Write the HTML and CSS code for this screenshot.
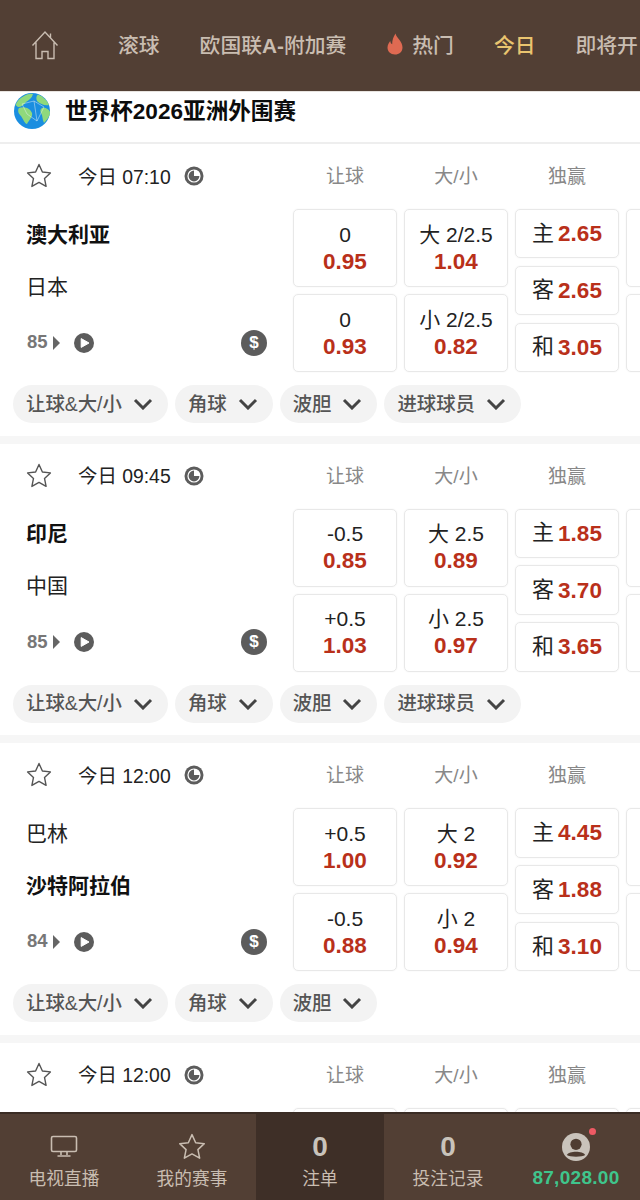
FILE: index.html
```html
<!DOCTYPE html>
<html lang="zh-CN">

<head>
    <meta charset="UTF-8">
    <meta name="viewport" content="width=device-width, initial-scale=1.0">
    <title>世界杯2026亚洲外围赛</title>
    <link rel="stylesheet" href="styles.css">
</head>

<body>

    <svg class="sprites" width="0" height="0">
        <symbol id="star" viewBox="0 0 26 26">
            <path d="M13 1.5 L16.4 9 L24.4 9.9 L18.5 15.4 L20.1 23.4 L13 19.4 L5.9 23.4 L7.5 15.4 L1.6 9.9 L9.6 9 Z" fill="none" stroke="currentColor" stroke-width="1.4" stroke-linejoin="round" />
        </symbol>
        <symbol id="clock" viewBox="0 0 20 20">
            <circle cx="10" cy="10" r="9.5" fill="#5c5c5c" />
            <circle cx="10" cy="10" r="6.6" fill="#fff" />
            <path d="M10 4.6 V10 H15.4 A5.4 5.4 0 1 1 10 4.6 Z" fill="#5c5c5c" />
        </symbol>
        <symbol id="play" viewBox="0 0 20 20">
            <circle cx="10" cy="10" r="10" fill="#5c5c5c" />
            <path d="M7.2 5.6 L15 10 L7.2 14.4 Z" fill="#fff" stroke="#fff" stroke-linejoin="round" />
        </symbol>
        <symbol id="chevron" viewBox="0 0 20 12">
            <path d="M2 2 L10 10 L18 2" fill="none" stroke="currentColor" stroke-width="3" />
        </symbol>
    </svg>

    <header class="top-nav">
        <svg class="home-icon" viewBox="0 0 28 30">
            <path d="M1.5 15.5 L14 2 L26.5 15.5 M19.5 7.5 V3.5 M5 12.5 V28.5 H11 V21.5 H17 V28.5 H23 V12.5" fill="none" stroke="#c9bdb1" stroke-width="1.4" />
        </svg>
        <a class="nav-link">滚球</a>
        <a class="nav-link">欧国联<b>A-</b>附加赛</a>
        <a class="nav-link nav-hot">
            <svg class="flame" viewBox="0 0 18 22">
                <path d="M9.5 0.5 C10.5 5 16.5 8 16.5 14.5 C16.5 19 13 21.5 9 21.5 C4.5 21.5 1.5 18.5 1.5 14.5 C1.5 11.5 3.2 9.5 4.2 8 C4.6 9.8 5.2 10.8 6.2 11.3 C6 7.5 7.5 3.5 9.5 0.5 Z" fill="#df6a52" />
            </svg>
            热门
        </a>
        <a class="nav-link nav-active">今日</a>
        <a class="nav-link">即将开</a>
    </header>

    <main class="match-list">
        <div class="league-row">
            <svg class="globe" viewBox="0 0 36 36">
                <circle cx="18" cy="18" r="18" fill="#1a8ee0" />
                <path d="M10 3 C13 1 17 0.5 19 1 C18 5 15 7 12 9 C10 12 7 14 4 14 L1.5 12 C3 8 6 5 10 3 Z" fill="#8fd97c" />
                <path d="M24 1.5 C29 3.5 33 7 35 12 C31 13 26 11 23 8 C22 6 22 3 24 1.5 Z" fill="#8fd97c" />
                <path d="M5 15 C10 13 16 15 18 20 C19 24 15 27 13 31 C11 31 9 26 7 23 C5 21 3 18 5 15 Z" fill="#8fd97c" />
                <path d="M28 15 C31 14 35 16 36 19 C36 23 33 27 30 30 C28 26 29 23 27 20 C26 18 26 16 28 15 Z" fill="#8fd97c" />
                <path d="M8 11 L20 8 L30 14 L23 28 L13 21 L8 11 M20 8 L23 28" fill="none" stroke="#e6f3f5" stroke-width="0.6" stroke-opacity="0.8" />
            </svg>
            <h1 class="league-name">世界杯2026亚洲外围赛</h1>
        </div>

        <section class="match-card">
            <div class="match-head">
                <div class="match-info">
                    <svg class="star-icon"><use href="#star" /></svg>
                    <span class="match-time">今日 07:10</span>
                    <svg class="clock-icon"><use href="#clock" /></svg>
                </div>
                <div class="col-label">让球</div>
                <div class="col-label">大/小</div>
                <div class="col-label">独赢</div>
            </div>
            <div class="match-body">
                <div class="teams">
                    <div class="team team-fav">澳大利亚</div>
                    <div class="team">日本</div>
                    <div class="match-meta">
                        <span class="market-count">85</span><span class="arrow"></span>
                        <svg class="play-icon"><use href="#play" /></svg>
                        <span class="dollar">$</span>
                    </div>
                </div>
                <div class="odds-col">
                    <div class="odd-box"><span>0</span><b>0.95</b></div>
                    <div class="odd-box"><span>0</span><b>0.93</b></div>
                </div>
                <div class="odds-col">
                    <div class="odd-box"><span>大 2/2.5</span><b>1.04</b></div>
                    <div class="odd-box"><span>小 2/2.5</span><b>0.82</b></div>
                </div>
                <div class="odds-col win-col">
                    <div class="odd-box"><span>主</span><b>2.65</b></div>
                    <div class="odd-box"><span>客</span><b>2.65</b></div>
                    <div class="odd-box"><span>和</span><b>3.05</b></div>
                </div>
                <div class="odds-col">
                    <div class="odd-box"></div>
                    <div class="odd-box"></div>
                </div>
            </div>
            <div class="chips">
                <div class="chip">让球&amp;大/小<svg class="chevron"><use href="#chevron" /></svg></div>
                <div class="chip">角球<svg class="chevron"><use href="#chevron" /></svg></div>
                <div class="chip">波胆<svg class="chevron"><use href="#chevron" /></svg></div>
                <div class="chip">进球球员<svg class="chevron"><use href="#chevron" /></svg></div>
            </div>
        </section>

        <section class="match-card">
            <div class="match-head">
                <div class="match-info">
                    <svg class="star-icon"><use href="#star" /></svg>
                    <span class="match-time">今日 09:45</span>
                    <svg class="clock-icon"><use href="#clock" /></svg>
                </div>
                <div class="col-label">让球</div>
                <div class="col-label">大/小</div>
                <div class="col-label">独赢</div>
            </div>
            <div class="match-body">
                <div class="teams">
                    <div class="team team-fav">印尼</div>
                    <div class="team">中国</div>
                    <div class="match-meta">
                        <span class="market-count">85</span><span class="arrow"></span>
                        <svg class="play-icon"><use href="#play" /></svg>
                        <span class="dollar">$</span>
                    </div>
                </div>
                <div class="odds-col">
                    <div class="odd-box"><span>-0.5</span><b>0.85</b></div>
                    <div class="odd-box"><span>+0.5</span><b>1.03</b></div>
                </div>
                <div class="odds-col">
                    <div class="odd-box"><span>大 2.5</span><b>0.89</b></div>
                    <div class="odd-box"><span>小 2.5</span><b>0.97</b></div>
                </div>
                <div class="odds-col win-col">
                    <div class="odd-box"><span>主</span><b>1.85</b></div>
                    <div class="odd-box"><span>客</span><b>3.70</b></div>
                    <div class="odd-box"><span>和</span><b>3.65</b></div>
                </div>
                <div class="odds-col">
                    <div class="odd-box"></div>
                    <div class="odd-box"></div>
                </div>
            </div>
            <div class="chips">
                <div class="chip">让球&amp;大/小<svg class="chevron"><use href="#chevron" /></svg></div>
                <div class="chip">角球<svg class="chevron"><use href="#chevron" /></svg></div>
                <div class="chip">波胆<svg class="chevron"><use href="#chevron" /></svg></div>
                <div class="chip">进球球员<svg class="chevron"><use href="#chevron" /></svg></div>
            </div>
        </section>

        <section class="match-card">
            <div class="match-head">
                <div class="match-info">
                    <svg class="star-icon"><use href="#star" /></svg>
                    <span class="match-time">今日 12:00</span>
                    <svg class="clock-icon"><use href="#clock" /></svg>
                </div>
                <div class="col-label">让球</div>
                <div class="col-label">大/小</div>
                <div class="col-label">独赢</div>
            </div>
            <div class="match-body">
                <div class="teams">
                    <div class="team">巴林</div>
                    <div class="team team-fav">沙特阿拉伯</div>
                    <div class="match-meta">
                        <span class="market-count">84</span><span class="arrow"></span>
                        <svg class="play-icon"><use href="#play" /></svg>
                        <span class="dollar">$</span>
                    </div>
                </div>
                <div class="odds-col">
                    <div class="odd-box"><span>+0.5</span><b>1.00</b></div>
                    <div class="odd-box"><span>-0.5</span><b>0.88</b></div>
                </div>
                <div class="odds-col">
                    <div class="odd-box"><span>大 2</span><b>0.92</b></div>
                    <div class="odd-box"><span>小 2</span><b>0.94</b></div>
                </div>
                <div class="odds-col win-col">
                    <div class="odd-box"><span>主</span><b>4.45</b></div>
                    <div class="odd-box"><span>客</span><b>1.88</b></div>
                    <div class="odd-box"><span>和</span><b>3.10</b></div>
                </div>
                <div class="odds-col">
                    <div class="odd-box"></div>
                    <div class="odd-box"></div>
                </div>
            </div>
            <div class="chips">
                <div class="chip">让球&amp;大/小<svg class="chevron"><use href="#chevron" /></svg></div>
                <div class="chip">角球<svg class="chevron"><use href="#chevron" /></svg></div>
                <div class="chip">波胆<svg class="chevron"><use href="#chevron" /></svg></div>
            </div>
        </section>

        <section class="match-card">
            <div class="match-head">
                <div class="match-info">
                    <svg class="star-icon"><use href="#star" /></svg>
                    <span class="match-time">今日 12:00</span>
                    <svg class="clock-icon"><use href="#clock" /></svg>
                </div>
                <div class="col-label">让球</div>
                <div class="col-label">大/小</div>
                <div class="col-label">独赢</div>
            </div>
            <div class="match-body">
                <div class="teams"></div>
                <div class="odds-col"><div class="odd-box"></div></div>
                <div class="odds-col"><div class="odd-box"></div></div>
                <div class="odds-col win-col"><div class="odd-box"></div></div>
                <div class="odds-col"><div class="odd-box"></div></div>
            </div>
        </section>
    </main>

    <footer class="bottom-bar">
        <div class="bar-item">
            <svg class="bar-icon" viewBox="0 0 28 24">
                <rect x="1.5" y="1.5" width="25" height="15" rx="1.5" fill="none" stroke="#c9bdb1" stroke-width="1.6" />
                <path d="M11 17 V20 M17 17 V20 M7.5 21 H20.5" fill="none" stroke="#c9bdb1" stroke-width="1.6" />
            </svg>
            <span class="bar-label">电视直播</span>
        </div>
        <div class="bar-item">
            <svg class="bar-icon bar-star"><use href="#star" /></svg>
            <span class="bar-label">我的赛事</span>
        </div>
        <div class="bar-item bar-active">
            <span class="bar-count">0</span>
            <span class="bar-label">注单</span>
        </div>
        <div class="bar-item">
            <span class="bar-count">0</span>
            <span class="bar-label">投注记录</span>
        </div>
        <div class="bar-item">
            <span class="bar-dot"></span>
            <svg class="bar-icon" viewBox="0 0 26 26">
                <circle cx="13" cy="13" r="13" fill="#c9c3bb" />
                <circle cx="13" cy="10.5" r="5.2" fill="#4f3d32" />
                <path d="M4.5 20.5 C6.5 16.5 19.5 16.5 21.5 20.5 C19 22.5 7 22.5 4.5 20.5 Z" fill="#4f3d32" />
            </svg>
            <span class="bar-balance">87,028.00</span>
        </div>
    </footer>

</body>

</html>
```

FILE: styles.css
```css
* {
    box-sizing: border-box;
}

html,
body {
    height: 1200px;
}

body {
    margin: 0;
    display: flex;
    flex-direction: column;
    overflow: hidden;
    background: #fff;
    color: #111;
    font-family: "Liberation Sans", "Noto Sans CJK SC", sans-serif;
}

.sprites {
    position: absolute;
}

.top-nav {
    flex: none;
    height: 92px;
    padding: 0 0 1px 31px;
    display: flex;
    align-items: center;
    gap: 40px;
    overflow: hidden;
    white-space: nowrap;
    background: #523f34;
    border-bottom: 1px solid #e8e4e0;
}

.home-icon {
    flex: none;
    width: 28px;
    height: 30px;
    margin-right: 19px;
}

.nav-link {
    flex: none;
    padding-bottom: 2px;
    font-size: 20.8px;
    font-weight: 500;
    color: #c9bdb1;
}

.nav-hot {
    display: flex;
    align-items: center;
    gap: 8px;
}

.nav-active {
    color: #e9c46f;
}

.flame {
    width: 18px;
    height: 22px;
}

.match-list {
    flex: 1;
    min-height: 0;
    overflow: hidden;
}

.league-row {
    height: 52px;
    padding: 1px 0 13px 14px;
    display: flex;
    align-items: center;
    gap: 15px;
    border-bottom: 2px solid #eee;
}

.globe {
    flex: none;
    width: 36px;
    height: 36px;
}

.league-name {
    margin: 0;
    padding-bottom: 3px;
    font-size: 22.6px;
    font-weight: 700;
    color: #0c0c0c;
}

.match-card {
    height: 299.67px;
    overflow: hidden;
    border-bottom: 8.67px solid #f6f6f6;
}

.match-head {
    height: 65px;
    padding-bottom: 1px;
    display: flex;
    align-items: center;
    gap: 7px;
}

.match-info {
    flex: none;
    width: 286px;
    padding-left: 26px;
    display: flex;
    align-items: center;
}

.star-icon {
    flex: none;
    width: 26px;
    height: 26px;
    color: #555;
}

.match-time {
    margin-left: 26px;
    padding-bottom: 2px;
    font-size: 19.4px;
    color: #222;
}

.clock-icon {
    flex: none;
    width: 20px;
    height: 20px;
    margin-left: 13px;
}

.col-label {
    flex: none;
    width: 104px;
    padding-bottom: 3px;
    text-align: center;
    font-size: 19px;
    color: #888;
}

.match-body {
    height: 163px;
    display: flex;
    gap: 7px;
}

.teams {
    flex: none;
    width: 286px;
    padding: 0 19px 0 26px;
    display: flex;
    flex-direction: column;
}

.team {
    flex: none;
    height: 52px;
    padding-bottom: 5px;
    display: flex;
    align-items: center;
    font-size: 21px;
    color: #222;
}

.team-fav {
    font-weight: 700;
    color: #111;
}

.match-meta {
    flex: 1;
    padding-left: 1px;
    display: flex;
    align-items: center;
}

.market-count {
    padding-bottom: 1px;
    font-size: 18.5px;
    font-weight: 700;
    color: #777;
}

.arrow {
    width: 0;
    height: 0;
    margin-left: 5px;
    border-style: solid;
    border-width: 7px 0 7px 7px;
    border-color: transparent transparent transparent #666;
}

.play-icon {
    flex: none;
    width: 20px;
    height: 20px;
    margin-left: 14px;
}

.dollar {
    flex: none;
    width: 26px;
    height: 26px;
    margin-left: auto;
    border-radius: 50%;
    background: #5c5c5c;
    color: #fff;
    font-size: 17px;
    font-weight: 700;
    line-height: 26px;
    text-align: center;
}

.odds-col {
    flex: none;
    width: 104px;
    display: flex;
    flex-direction: column;
    gap: 7px;
}

.odd-box {
    flex: 1;
    display: flex;
    flex-direction: column;
    align-items: center;
    justify-content: center;
    border: 1px solid #e8e8e8;
    border-radius: 5px;
    box-shadow: 0 0 2px rgba(0, 0, 0, 0.06);
    font-size: 21px;
    line-height: 26px;
    color: #222;
}

.odd-box b {
    margin-top: 1px;
    font-size: 22.5px;
    color: #b9301a;
}

.win-col {
    gap: 7.5px;
}

.win-col .odd-box {
    flex-direction: row;
    gap: 4px;
    font-size: 22px;
}

.chips {
    margin-top: 13px;
    padding-left: 13px;
    display: flex;
    gap: 7px;
}

.chip {
    height: 38px;
    padding: 0 15px 4px 13px;
    display: flex;
    align-items: center;
    gap: 11px;
    border-radius: 19px;
    background: #f3f3f3;
    font-size: 19.4px;
    font-weight: 500;
    color: #555;
}

.chevron {
    flex: none;
    width: 20px;
    height: 12px;
    margin-top: 4px;
    color: #444;
}

.bottom-bar {
    flex: none;
    height: 88px;
    display: flex;
    background: #523f34;
    border-top: 2px solid #3a2c24;
}

.bar-item {
    position: relative;
    flex: 1;
    padding-top: 18px;
    display: flex;
    flex-direction: column;
    align-items: center;
    gap: 5px;
}

.bar-active {
    background: #3e2f27;
}

.bar-icon {
    flex: none;
    width: 28px;
    height: 30px;
}

.bar-star {
    color: #c9bdb1;
}

.bar-label {
    font-size: 17.7px;
    line-height: 24px;
    color: #c9bdb1;
}

.bar-count {
    font-size: 28px;
    font-weight: 700;
    line-height: 30px;
    color: #c9c3bb;
}

.bar-balance {
    margin-top: -1px;
    font-size: 19px;
    font-weight: 700;
    line-height: 24px;
    letter-spacing: 0.3px;
    color: #3fc58c;
}

.bar-dot {
    position: absolute;
    top: 14px;
    left: 77px;
    width: 7px;
    height: 7px;
    border-radius: 50%;
    background: #ee5a64;
}
```
